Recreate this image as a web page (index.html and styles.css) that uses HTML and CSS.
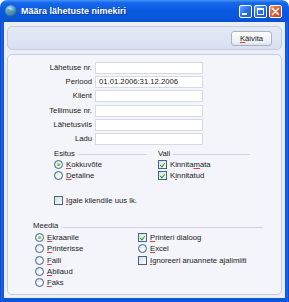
FILE: index.html
```html
<!DOCTYPE html>
<html>
<head>
<meta charset="utf-8">
<link rel="stylesheet" href="styles.css">
</head>
<body>
<div class="window">
  <div class="titlebar">
    <svg class="appicon" width="14" height="14" viewBox="0 0 14 14">
      <defs>
        <radialGradient id="g" cx="40%" cy="35%" r="65%">
          <stop offset="0" stop-color="#d8f0ff"/>
          <stop offset="0.45" stop-color="#5aa8e8"/>
          <stop offset="1" stop-color="#1d4f9a"/>
        </radialGradient>
      </defs>
      <circle cx="7" cy="7" r="6.3" fill="url(#g)" stroke="#2a5c9c" stroke-width="0.8"/>
      <path d="M3 5.5 Q5 4 6.5 5.5 T10 6.5 Q9.5 9 7.5 10 Q6 8.5 4 9 Z" fill="#3d8f4a" opacity="0.55"/>
    </svg>
    <span class="title">Määra lähetuste nimekiri</span>
    <div class="tbtns">
      <span class="tb"><svg width="13" height="13" viewBox="0 0 13 13"><rect x="3" y="8" width="5" height="2" fill="#fff"/></svg></span>
      <span class="tb"><svg width="13" height="13" viewBox="0 0 13 13"><rect x="3.5" y="3.5" width="6" height="6" fill="none" stroke="#fff" stroke-width="1"/><rect x="3" y="3" width="7" height="2" fill="#fff"/></svg></span>
      <span class="tb close"><svg width="13" height="13" viewBox="0 0 13 13"><path d="M3.5 3.5 L9.5 9.5 M9.5 3.5 L3.5 9.5" stroke="#fff" stroke-width="1.6" stroke-linecap="round"/></svg></span>
    </div>
  </div>
  <div class="frame">
    <div class="client">
      <div class="toolbar">
        <button class="btn"><u>K</u>äivita</button>
      </div>
      <div class="panel">
        <div class="fields">
          <label>Lähetuse nr.</label><div class="input"></div>
          <label>Periood</label><div class="input">01.01.2006:31.12.2006</div>
          <label>Klient</label><div class="input"></div>
          <label>Tellimuse nr.</label><div class="input"></div>
          <label>Lähetusviis</label><div class="input"></div>
          <label>Ladu</label><div class="input"></div>
        </div>
        <div class="groups">
          <div class="group esitus">
            <div class="ghead"><span>Esitus</span><i class="gline"></i></div>
            <div class="opt"><span class="radio on"></span><span><u>K</u>okkuvõte</span></div>
            <div class="opt"><span class="radio"></span><span><u>D</u>etailne</span></div>
          </div>
          <div class="group vali">
            <div class="ghead"><span>Vali</span><i class="gline"></i></div>
            <div class="opt"><span class="check on"></span><span>Kinnita<u>m</u>ata</span></div>
            <div class="opt"><span class="check on"></span><span>K<u>i</u>nnitatud</span></div>
          </div>
        </div>
        <div class="opt igale"><span class="check"></span><span><u>I</u>gale kliendile uus lk.</span></div>
        <div class="group meedia">
          <div class="ghead"><span>Meedia</span><i class="gline"></i></div>
          <div class="mcols">
            <div class="mcol">
              <div class="opt"><span class="radio on"></span><span><u>E</u>kraanile</span></div>
              <div class="opt"><span class="radio"></span><span><u>P</u>rinterisse</span></div>
              <div class="opt"><span class="radio"></span><span><u>F</u>aili</span></div>
              <div class="opt"><span class="radio"></span><span><u>A</u>bilaud</span></div>
              <div class="opt"><span class="radio"></span><span><u>F</u>aks</span></div>
            </div>
            <div class="mcol">
              <div class="opt"><span class="check on"></span><span><u>P</u>rinteri dialoog</span></div>
              <div class="opt"><span class="radio"></span><span><u>E</u>xcel</span></div>
              <div class="opt"><span class="check"></span><span><u>I</u>gnoreeri aruannete ajalimiiti</span></div>
            </div>
          </div>
        </div>
      </div>
    </div>
  </div>
</div>
</body>
</html>
```

FILE: styles.css
```css
html, body {
  margin: 0;
  padding: 0;
  background: #ffffff;
}
body {
  width: 289px;
  height: 302px;
  overflow: hidden;
  font-family: "Liberation Sans", Arial, sans-serif;
  font-size: 7.7px;
  color: #1a1a1a;
}
.window {
  width: 289px;
  height: 302px;
  display: flex;
  flex-direction: column;
}
.titlebar {
  height: 22px;
  flex: none;
  display: flex;
  align-items: center;
  padding: 0 7px 0 4px;
  border-radius: 7px 7px 0 0;
  background: linear-gradient(#4a95f8 0%, #1768ec 12%, #0a5be2 45%, #0857dc 80%, #0a50d0 100%);
}
.appicon {
  flex: none;
  display: block;
}
.title {
  margin-left: 3px;
  color: #ffffff;
  font-weight: bold;
  font-size: 9px;
  text-shadow: 1px 1px 0 #0a3a9a;
  white-space: nowrap;
}
.tbtns {
  margin-left: auto;
  display: flex;
  gap: 2px;
}
.tb {
  width: 13px;
  height: 13px;
  box-sizing: border-box;
  border: 1px solid #ffffff;
  border-radius: 2px;
  background: linear-gradient(135deg, #6fa6f8 0%, #2a6ef0 50%, #1c58d8 100%);
  display: flex;
  align-items: center;
  justify-content: center;
  overflow: hidden;
}
.tb svg {
  flex: none;
  margin: -1px;
}
.tb.close {
  background: linear-gradient(135deg, #f0a080 0%, #e2562c 50%, #c8401a 100%);
}
.frame {
  flex: 1;
  display: flex;
  padding: 0 4px 4px;
  background: linear-gradient(90deg, #0840c8 0, #1a62e8 1.5px, #0a55dc 4px, #0a55dc calc(100% - 4px), #1a62e8 calc(100% - 1.5px), #0840c8 100%);
}
.client {
  flex: 1;
  display: flex;
  flex-direction: column;
  gap: 4px;
  padding: 4px 3px 3px;
  background: #eceef5;
}
.toolbar {
  height: 24px;
  flex: none;
  box-sizing: border-box;
  border: 1px solid #c4cde0;
  border-radius: 5px;
  background: linear-gradient(#e4eaf5, #d8e0f0);
  display: flex;
  align-items: center;
  justify-content: flex-end;
  padding-right: 9px;
}
.btn {
  width: 41px;
  height: 15px;
  box-sizing: border-box;
  border: 1px solid #a8b4c8;
  border-radius: 3px;
  background: linear-gradient(#ffffff, #eceef2 80%, #dcdfe6);
  font-family: "Liberation Sans", Arial, sans-serif;
  font-size: 7.7px;
  color: #1a1a1a;
  padding: 0;
}
u {
  text-decoration-color: #e04040;
  text-underline-offset: 1px;
}
.panel {
  flex: 1;
  box-sizing: border-box;
  border: 1px solid #c4cde0;
  border-radius: 5px;
  background: #f4f5fa;
  padding-top: 7px;
}
.fields {
  display: grid;
  grid-template-columns: 84px 108px;
  column-gap: 3px;
  row-gap: 2.2px;
  grid-auto-rows: 12px;
}
.fields label {
  text-align: right;
  line-height: 12px;
}
.input {
  box-sizing: border-box;
  border: 1px solid #d6dae6;
  background: #ffffff;
  line-height: 10px;
  padding-left: 3px;
  white-space: nowrap;
}
.groups {
  display: flex;
  gap: 11px;
  margin: 4px 0 0 46px;
}
.esitus { width: 93px; }
.vali { width: 92px; }
.ghead {
  height: 10px;
  display: flex;
  align-items: center;
  gap: 3px;
  line-height: 10px;
}
.gline {
  flex: 1;
  height: 0;
  border-top: 1px solid #d0d4de;
  margin-top: 2px;
}
.group > .opt:first-of-type {
  margin-top: 1.5px;
}
.opt {
  height: 11px;
  display: flex;
  align-items: center;
  gap: 3px;
  white-space: nowrap;
}
.igale {
  margin: 14px 0 0 46px;
}
.meedia {
  width: 230px;
  margin: 15.5px 0 0 25px;
}
.mcols {
  display: grid;
  grid-template-columns: 103px auto;
  padding-left: 2px;
  margin-top: 0.5px;
}
.mcol .opt {
  height: 11.25px;
}
.radio {
  flex: none;
  width: 9px;
  height: 9px;
  box-sizing: border-box;
  border: 1px solid #3c6496;
  border-radius: 50%;
  background: radial-gradient(circle at 65% 65%, #ffffff 0, #f2f2ee 40%, #d8d8d2 100%);
  position: relative;
}
.radio.on::after {
  content: "";
  position: absolute;
  left: 2px;
  top: 2px;
  width: 3px;
  height: 3px;
  border-radius: 50%;
  background: radial-gradient(circle at 35% 35%, #8ee888, #23a021);
}
.check {
  flex: none;
  width: 9px;
  height: 9px;
  box-sizing: border-box;
  border: 1px solid #3c6496;
  background: linear-gradient(135deg, #dcdcd6, #ffffff);
  position: relative;
}
.check.on::after {
  content: "";
  position: absolute;
  left: 2.2px;
  top: 0.6px;
  width: 2px;
  height: 4px;
  border: solid #21a121;
  border-width: 0 1.5px 1.5px 0;
  transform: rotate(40deg);
}
```
